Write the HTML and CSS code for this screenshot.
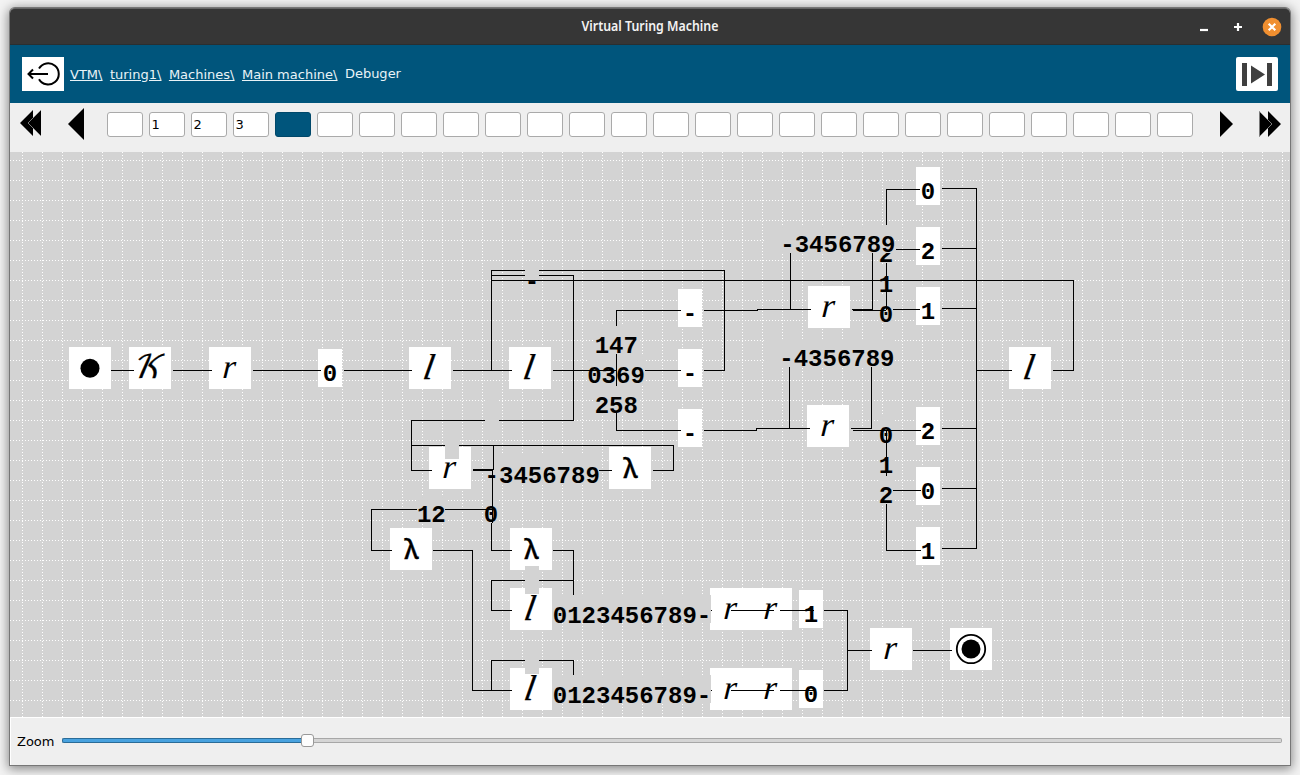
FILE: index.html
```html
<!DOCTYPE html>
<html lang="en">
<head>
<meta charset="utf-8">
<title>Virtual Turing Machine</title>
<link rel="stylesheet" href="styles.css">
</head>
<body>
<div class="window">
  <header class="titlebar">
    <span class="titlebar-side"></span>
    <h1 class="title">Virtual Turing Machine</h1>
    <div class="titlebar-side controls">
      <svg width="10" height="10" viewBox="0 0 10 10"><path class="ctl" d="M1 8h8"/></svg>
      <svg width="10" height="10" viewBox="0 0 10 10"><path class="ctl" d="M1 5h8M5 1v8"/></svg>
      <svg width="20" height="20" viewBox="0 0 20 20"><circle cx="10" cy="10" r="9.3" fill="#f08f30"/><path class="ctl" d="M6.7 6.7l6.6 6.6M13.3 6.7l-6.6 6.6"/></svg>
    </div>
  </header>
  <nav class="crumbbar">
    <button class="exit" aria-label="Back">
      <svg width="42" height="34" viewBox="0 0 42 34" fill="none" stroke="#000" stroke-width="2"><path d="M17 11.6A10.6 10.6 0 1 1 17 22.2"/><path d="M26 17H7M11 12.5L6.5 17l4.500 4.500"/></svg>
    </button>
    <a class="crumb">VTM\</a><a class="crumb">turing1\</a><a class="crumb">Machines\</a><a class="crumb">Main machine\</a><span class="here">Debuger</span>
    <button class="run" aria-label="Run">
      <svg width="42" height="34" viewBox="0 0 42 34" fill="#3f3f3f"><path d="M6 6h5v23H6zM31 6h5v23h-5zM15 8.500L29 17.500 15 26.500z"/></svg>
    </button>
  </nav>
  <div class="tapebar">
    <svg class="nav-icon first" width="22" height="28" viewBox="0 0 22 28"><path d="M0 14L13 1v26zM8 14L21 1v26z"/><path d="M21 1L8 14l13 13" fill="none" stroke="#999" stroke-width=".8"/></svg>
    <svg class="nav-icon prev" width="16" height="32" viewBox="0 0 16 32"><path d="M0 16L16 0v32z"/></svg>
    <div class="tape" id="tape"></div>
    <svg class="nav-icon next" width="14" height="28" viewBox="0 0 14 28"><path d="M0 1L13 14 0 27z"/></svg>
    <svg class="nav-icon last" width="22" height="28" viewBox="0 0 22 28"><path d="M9 1l13 13L9 27zM0 1l13 13L0 27z"/><path d="M.5 1v26M0 1l13 13L0 27" fill="none" stroke="#999" stroke-width=".8"/></svg>
  </div>
  <svg class="canvas" id="canvas" width="1280" height="565" viewBox="10 152 1280 565"></svg>
  <footer class="zoombar">
    <label>Zoom</label>
    <div class="slider"><div class="filled"></div><div class="handle"></div><div class="rest"></div></div>
  </footer>
</div>
<script src="diagram.js"></script>
</body>
</html>
```
FILE: styles.css
```css
body { margin: 0; width: 1300px; height: 775px; box-sizing: border-box; padding: 8px 10px 10px; overflow: hidden; background: #f3f3f3; font: 13px "DejaVu Sans", sans-serif; }
.window { display: flex; flex-direction: column; width: 1280px; height: 757px; background: #efefef; border-radius: 5px 5px 0 0; box-shadow: 0 0 0 1px #777, 0 2px 11px 2px rgba(0,0,0,.45); }
.titlebar { display: flex; align-items: center; flex: 0 0 37px; height: 37px; box-sizing: border-box; border-top: 1px solid #656565; border-bottom: 1px solid #292f31; background: #363636; border-radius: 5px 5px 0 0; }
.titlebar-side { flex: 1; padding: 0 8px; }
.title { margin: -2px 0 0; width: 136px; color: #f2f2f2; font: 600 13.500px "Noto Sans", sans-serif; white-space: nowrap; display: flex; justify-content: center; transform: scaleX(.915); }
.controls { display: flex; align-items: center; justify-content: flex-end; gap: 24px; }
.controls svg:last-child { margin-left: -5px; }
.ctl { stroke: #fff; stroke-width: 2.2; fill: none; }
.crumbbar { display: flex; align-items: center; flex: 0 0 58px; padding: 0 12px; background: #00557c; color: #e9f3f7; }
.exit, .run { width: 42px; height: 34px; padding: 0; border: 0; background: #fff; }
.run { margin-left: auto; border-radius: 2px; }
.exit svg, .run svg { display: block; }
.exit { margin-right: 6px; }
.crumb { margin-right: 7.500px; text-decoration: underline; }
.here { margin-top: -2px; }
.tapebar { display: flex; align-items: flex-start; flex: 0 0 49px; background: #efefef; }
.nav-icon { display: block; }
.first { margin: 6px 0 0 10px; }
.prev { margin: 5px 0 0 26px; }
.tape { display: flex; gap: 6px; margin: 9px 27px 0 23px; }
.cell { box-sizing: border-box; width: 36px; height: 25px; padding-left: 1.500px; line-height: 24px; border: 1px solid #aaa; border-radius: 3px; background: #fff; }
.cell.active { border-color: #00486a; background: #00557c; }
.next { margin-top: 7px; }
.last { margin: 7px 0 0 25px; }
.canvas { display: block; flex: 0 0 565px; background: #d3d3d3; }
.grid { stroke: #fff; stroke-dasharray: 1 2; shape-rendering: crispEdges; }
.blank { fill: #d3d3d3; }
.node { fill: #fff; }
.wire { stroke: #000; fill: none; shape-rendering: crispEdges; }
.mono { font: bold 24px "Liberation Mono", monospace; }
.script { font: italic 34px "Liberation Serif", serif; text-anchor: middle; }
.tall { font-size: 36px; stroke: #000; stroke-width: .3; }
.capital { font: 32px "DejaVu Math TeX Gyre", "Liberation Serif", serif; stroke: #000; stroke-width: .3; }
.lambda { font: 500 27px "Noto Sans", sans-serif; text-anchor: middle; stroke: #000; stroke-width: .3; }
.zoombar { display: flex; align-items: center; flex: 1; box-sizing: border-box; border: 1px solid #fff; border-width: 1px 0 0 1px; padding: 0 8px 0 6px; }
.slider { display: flex; align-items: center; flex: 1; margin: -2px 0 0 8px; }
.filled { box-sizing: border-box; width: 239px; height: 5px; border: 1px solid #2a6c98; border-right: 0; border-radius: 2px 0 0 2px; background: #48a2df; }
.handle { box-sizing: border-box; width: 13px; height: 13px; border: 1px solid #999; border-radius: 3px; background: #fdfdfd; }
.rest { box-sizing: border-box; flex: 1; height: 5px; border: 1px solid #a7a7a7; border-left: 0; border-radius: 0 2px 2px 0; background: #d5d5d5; }
```
FILE: diagram.js
```js
// Tape cells
const tape = ['', '1', '2', '3'];
document.getElementById('tape').innerHTML = Array.from({length: 26}, (_, i) =>
  `<div class="cell${i === 4 ? ' active' : ''}">${tape[i] || ''}</div>`).join('');

// Machine diagram
let out = '';
const rect = (cls, x, y, w, h) => { out += `<rect class="${cls}" x="${x}" y="${y}" width="${w}" height="${h}"/>`; };
const text = (s, x, y) => { out += `<text class="mono" x="${x}" y="${y}">${s}</text>`; };
const mid = (s, x, y) => text(s, x - s.length * 7.2, y);
const glyph = (s, x, y) => {
  const [ch, cls, dx, dy, skew] = { K: ['𝒦', 'script capital', 18, 31, -12], r: ['r', 'script', 19.500, 30.500, -4], l: ['l', 'script tall', 18, 31.500, -10], L: ['λ', 'lambda', 21.500, 31, 0] }[s];
  out += `<text class="${cls}" transform="translate(${x + dx} ${y + dy}) skewX(${skew})">${ch}</text>`;
};
const box = (s, x, y) => { rect('node', x, y, 42, 42); glyph(s, x, y); };
const small = (s, x, y) => { rect('node', x, y, 24, 38); mid(s, x + 12, y + 32); };

for (let x = 22; x < 1290; x += 20) out += `<path class="grid" d="M${x + .5} 152V717"/>`;
for (let y = 160; y < 717; y += 20) out += `<path class="grid" d="M10 ${y + .5}H1290"/>`;

// State boxes
rect('node', 69, 347, 42, 42);
out += '<circle cx="90" cy="368.200" r="9.500"/>';
box('K', 129, 347); box('r', 209, 347); box('l', 409, 347); box('l', 509, 347);
box('r', 808, 286); box('r', 807, 405); box('l', 1009, 347);
rect('node', 429, 447, 42, 42); rect('node', 510, 528, 42, 42);
box('L', 609, 447); box('L', 390, 528);
rect('node', 510, 588, 42, 42); rect('node', 510, 668, 42, 42);
for (const y of [588, 668]) { rect('node', 710, y, 82, 42); glyph('r', 710, y); glyph('r', 750, y); }
box('r', 870, 628);
rect('node', 950, 628, 42, 42);
out += '<circle cx="971" cy="649" r="14.200" fill="none" stroke="#000" stroke-width="1.800"/><circle cx="971" cy="649" r="9.500"/>';

// Labels that sit under the blanked areas
rect('blank', 880, 235, 13, 28); mid('2', 886, 262);
[[764, 225, 131, 28], [764, 339, 131, 28], [595, 326, 43, 28], [587, 356, 58, 28], [595, 386, 43, 28],
 [485, 455, 114, 28], [416, 495, 30, 28], [484, 495, 14, 28], [553, 595, 158, 28], [553, 675, 158, 28],
 [525, 261, 14, 28], [485, 400, 14, 28], [445, 431, 14, 28], [525, 566, 14, 28], [525, 646, 14, 28],
 [880, 265, 13, 28], [880, 295, 13, 28], [880, 416, 13, 28], [880, 446, 13, 28], [880, 476, 13, 28]
].forEach(r => rect('blank', ...r));
glyph('r', 429, 447); glyph('L', 510, 528); glyph('l', 510, 588); glyph('l', 510, 668);

small('0', 318, 349);
[289, 349, 409].forEach(y => small('-', 678, y));
[['0', 167], ['2', 227], ['1', 287], ['2', 407], ['0', 467], ['1', 527]].forEach(([s, y]) => small(s, 916, y));
small('1', 799, 590); small('0', 799, 670);

mid('147', 616.300, 353); mid('0369', 616, 383); mid('258', 616.300, 413);
text('-3456789', 780.300, 252); text('-4356789', 779.300, 366); text('-3456789', 484.600, 483);
mid('1', 886, 292); mid('0', 886, 322);
mid('0', 886, 443); mid('1', 886, 473); mid('2', 886, 503);
mid('12', 431.300, 522); mid('0', 491, 522); mid('-', 532, 288.500);
text('0123456789-', 552.800, 623); text('0123456789-', 552.800, 703);

// Wires
const wires = `M111 370H134M173 370H212M253 370H321M344 370H412M453 370H512M553 370H616M645 370H681
M616 326V310H681M616 354V386M616 413V430H681
M704 310H757V309H811M852 309H872V253M790 253V309M853 310H886M886 225V189H920M886 263V310M896 249H920M893 309H920
M942 188H976V548H942M942 248H976M942 308H976M942 428H976M942 488H976
M704 370H724V270H539M525 270H491V370M491 275H525M539 275H573V420H499M485 420H411V470H432
M491 280H1073V370H1053M976 370H1012
M704 430H756V428H810M851 428H871V367M789 367V428M853 430H921M886 430V476M893 490H921M886 504V550H921
M411 445H445M459 445H673V470H653M493 445V469H473M473 470H492V523M599 470H612
M492 509H445M417 509H371V550H392M433 550H472V690H512M491 523V550H512M553 550H573V595
M525 580H491V610H512M539 580H573M525 660H491V690M539 660H573V675
M711 610H712M711 690H712M731 610H774M731 690H774M780 610H814M780 690H814
M824 610H847V690H824M847 650H872M913 650H952`;
out += `<path class="wire" transform="translate(.49 .49)" d="${wires}"/>`;
document.getElementById('canvas').innerHTML = out;
```
